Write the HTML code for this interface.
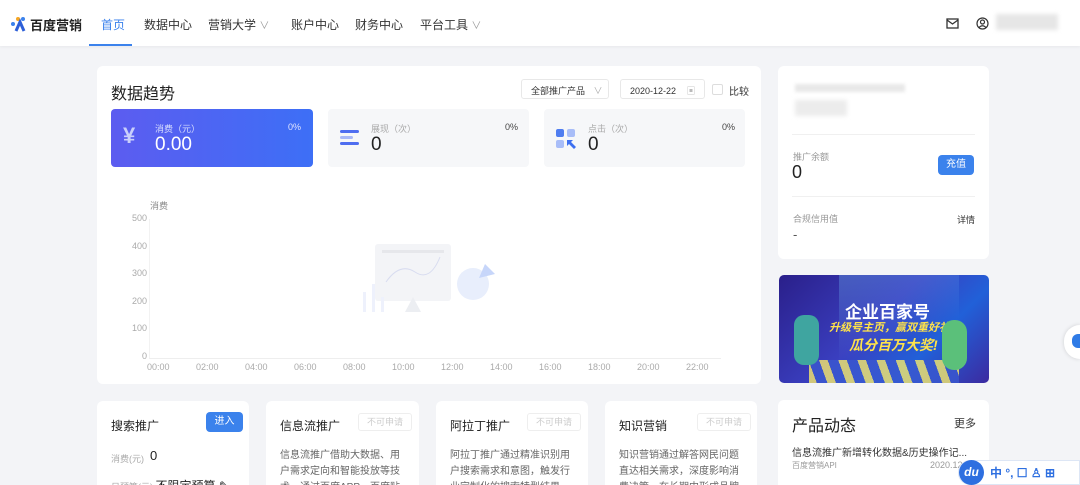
<!DOCTYPE html>
<html><head><meta charset="utf-8">
<style>
*{margin:0;padding:0;box-sizing:border-box}
html,body{width:1080px;height:485px;overflow:hidden}
body{background:#f3f4f7;font-family:"Liberation Sans","Noto Sans CJK SC",sans-serif;color:#222}
#root{position:relative;width:1080px;height:485px;overflow:hidden}
.abs{position:absolute}
.hdr{left:0;top:0;width:1080px;height:46px;background:#fff;box-shadow:0 1px 3px rgba(0,0,0,.05)}
.nav{top:16px;font-size:12px;color:#333}
.card{background:#fff;border-radius:6px 6px 0 0}
.t{white-space:nowrap}
.ylab{font-size:9px;color:#aaa;width:30px;text-align:right;left:117px}
.xlab{font-size:9px;color:#aaa;top:362px}
.btn{background:#3b82ec;color:#fff;border-radius:4px;font-size:10px;text-align:center}
.dis{border:1px solid #eee;color:#ccc;font-size:9px;text-align:center;border-radius:3px;width:54px;height:18px;line-height:16px}
.desc{font-size:10px;color:#666;line-height:16px;height:37px;overflow:hidden}
</style></head><body><div id="root">
<div class="abs hdr"></div>
<svg class="abs" style="left:10px;top:16px" width="20" height="16" viewBox="0 0 20 16">
<circle cx="3" cy="8" r="2" fill="#3b82ec"/><circle cx="8" cy="3" r="2" fill="#f5a623"/><circle cx="13" cy="3" r="2" fill="#3b82ec"/>
<path d="M6 15 L10 6 L14 15" stroke="#2d5fd8" stroke-width="3" fill="none"/></svg>
<div class="abs t" style="left:30px;top:15px;font-size:13px;font-weight:bold;color:#222">百度营销</div>
<div class="abs nav t" style="left:101px;color:#3b82ec">首页</div>
<div class="abs" style="left:89px;top:44px;width:43px;height:2px;background:#3b82ec"></div>
<div class="abs nav t" style="left:144px">数据中心</div>
<div class="abs nav t" style="left:208px">营销大学 <span style="color:#999;font-size:10px">∨</span></div>
<div class="abs nav t" style="left:291px">账户中心</div>
<div class="abs nav t" style="left:355px">财务中心</div>
<div class="abs nav t" style="left:420px">平台工具 <span style="color:#999;font-size:10px">∨</span></div>
<svg class="abs" style="left:946px;top:18px" width="13" height="11"><rect x="1" y="1" width="11" height="9" fill="none" stroke="#333" stroke-width="1.3"/><path d="M1 2 L6.5 6 L12 2" fill="none" stroke="#333" stroke-width="1.3"/></svg>
<svg class="abs" style="left:976px;top:17px" width="13" height="13"><circle cx="6.5" cy="6.5" r="5.5" fill="none" stroke="#333" stroke-width="1.2"/><circle cx="6.5" cy="5" r="2" fill="none" stroke="#333" stroke-width="1.2"/><path d="M3 10.5 Q6.5 7 10 10.5" fill="none" stroke="#333" stroke-width="1.2"/></svg>
<div class="abs" style="left:996px;top:14px;width:62px;height:16px;background:#e6e6e6;filter:blur(2px)"></div>

<div class="abs card" style="left:97px;top:66px;width:664px;height:318px;border-radius:6px"></div>
<div class="abs t" style="left:111px;top:80px;font-size:16px;color:#222">数据趋势</div>
<div class="abs t" style="left:521px;top:79px;width:88px;height:20px;border:1px solid #e8e8e8;border-radius:3px;font-size:9px;color:#333;padding:4px 0 0 9px">全部推广产品 <span style="color:#aaa;margin-left:6px">∨</span></div>
<div class="abs t" style="left:620px;top:79px;width:85px;height:20px;border:1px solid #e8e8e8;border-radius:3px;font-size:9px;color:#333;padding:4px 0 0 9px">2020-12-22 <span style="color:#bbb;margin-left:8px">▣</span></div>
<div class="abs" style="left:712px;top:84px;width:11px;height:11px;border:1px solid #ddd;border-radius:2px"></div>
<div class="abs t" style="left:729px;top:83px;font-size:10px;color:#333">比较</div>

<div class="abs" style="left:111px;top:109px;width:202px;height:58px;border-radius:4px;background:linear-gradient(90deg,#5c5cf0,#3d6ff6)"></div>
<div class="abs t" style="left:123px;top:123px;font-size:22px;color:#c9cffb;font-weight:bold">¥</div>
<div class="abs t" style="left:155px;top:122px;font-size:9px;color:#d8defd">消费（元）</div>
<div class="abs t" style="left:155px;top:134px;font-size:19px;color:#fff">0.00</div>
<div class="abs t" style="left:288px;top:122px;font-size:9px;color:#e0e5ff">0%</div>

<div class="abs" style="left:328px;top:109px;width:201px;height:58px;border-radius:4px;background:#f6f7f9"></div>
<div class="abs" style="left:340px;top:130px;width:19px;height:3px;background:#4f6ef0;border-radius:2px"></div>
<div class="abs" style="left:340px;top:136px;width:13px;height:3px;background:#a9b9f8;border-radius:2px"></div>
<div class="abs" style="left:340px;top:142px;width:19px;height:3px;background:#4f6ef0;border-radius:2px"></div>
<div class="abs t" style="left:371px;top:122px;font-size:9px;color:#aaa">展现（次）</div>
<div class="abs t" style="left:371px;top:134px;font-size:19px">0</div>
<div class="abs t" style="left:505px;top:122px;font-size:9px;color:#444">0%</div>

<div class="abs" style="left:544px;top:109px;width:201px;height:58px;border-radius:4px;background:#f6f7f9"></div>
<div class="abs" style="left:556px;top:129px;width:8px;height:8px;background:#4f7df0;border-radius:2px"></div>
<div class="abs" style="left:567px;top:129px;width:8px;height:8px;background:#a8bdf8;border-radius:2px"></div>
<div class="abs" style="left:556px;top:140px;width:8px;height:8px;background:#a8bdf8;border-radius:2px"></div>
<svg class="abs" style="left:567px;top:140px" width="9" height="9"><path d="M0 0 H6 L4 2 L9 7 L7 9 L2 4 L0 6Z" fill="#3d6ff0"/></svg>
<div class="abs t" style="left:588px;top:122px;font-size:9px;color:#aaa">点击（次）</div>
<div class="abs t" style="left:588px;top:134px;font-size:19px">0</div>
<div class="abs t" style="left:722px;top:122px;font-size:9px;color:#444">0%</div>

<div class="abs t" style="left:150px;top:199px;font-size:9px;color:#888">消费</div>
<div class="abs ylab" style="top:213px">500</div>
<div class="abs ylab" style="top:241px">400</div>
<div class="abs ylab" style="top:268px">300</div>
<div class="abs ylab" style="top:296px">200</div>
<div class="abs ylab" style="top:323px">100</div>
<div class="abs ylab" style="top:351px">0</div>
<div class="abs" style="left:149px;top:219px;width:1px;height:140px;background:#f2f2f2"></div>
<div class="abs" style="left:149px;top:358px;width:572px;height:1px;background:#eee"></div>
<div class="abs xlab" style="left:147px">00:00</div>
<div class="abs xlab" style="left:196px">02:00</div>
<div class="abs xlab" style="left:245px">04:00</div>
<div class="abs xlab" style="left:294px">06:00</div>
<div class="abs xlab" style="left:343px">08:00</div>
<div class="abs xlab" style="left:392px">10:00</div>
<div class="abs xlab" style="left:441px">12:00</div>
<div class="abs xlab" style="left:490px">14:00</div>
<div class="abs xlab" style="left:539px">16:00</div>
<div class="abs xlab" style="left:588px">18:00</div>
<div class="abs xlab" style="left:637px">20:00</div>
<div class="abs xlab" style="left:686px">22:00</div>
<svg class="abs" style="left:360px;top:242px" width="140" height="72">
<rect x="15" y="2" width="76" height="57" rx="3" fill="#f3f4f7"/>
<rect x="22" y="8" width="62" height="3" fill="#e6e7eb"/>
<path d="M26 40 Q40 20 55 30 T80 15" fill="none" stroke="#d8dcf0" stroke-width="1"/>
<path d="M45 70 L53 55 L61 70Z" fill="#eceef2"/>
<rect x="3" y="50" width="3" height="20" fill="#eef1fc"/><rect x="12" y="42" width="3" height="28" fill="#eef1fc"/><rect x="21" y="55" width="3" height="15" fill="#eef1fc"/>
<circle cx="113" cy="42" r="16" fill="#e8eefc"/><path d="M119 36 L125 22 L135 32Z" fill="#c7d6fa"/>
</svg>

<div class="abs card" style="left:778px;top:66px;width:211px;height:193px;border-radius:6px"></div>
<div class="abs" style="left:795px;top:84px;width:110px;height:8px;background:#e8e8e8;filter:blur(1.5px)"></div>
<div class="abs" style="left:795px;top:100px;width:52px;height:16px;background:#ececec;filter:blur(2px)"></div>
<div class="abs" style="left:792px;top:134px;width:183px;height:1px;background:#f0f0f0"></div>
<div class="abs t" style="left:793px;top:150px;font-size:9px;color:#999">推广余额</div>
<div class="abs t" style="left:792px;top:162px;font-size:18px">0</div>
<div class="abs btn" style="left:938px;top:155px;width:36px;height:20px;line-height:20px">充值</div>
<div class="abs" style="left:792px;top:196px;width:183px;height:1px;background:#f0f0f0"></div>
<div class="abs t" style="left:793px;top:212px;font-size:9px;color:#999">合规信用值</div>
<div class="abs t" style="left:957px;top:213px;font-size:9px;color:#333">详情</div>
<div class="abs t" style="left:793px;top:227px;font-size:13px;color:#555">-</div>

<div class="abs" style="left:779px;top:275px;width:210px;height:108px;border-radius:5px;overflow:hidden;background:linear-gradient(135deg,#2a1f8a,#3a3fc0 45%,#2160d8 70%,#3c2aa0)">
<div class="abs" style="left:60px;top:-10px;width:120px;height:120px;background:linear-gradient(160deg,rgba(120,200,255,.35),transparent 60%)"></div>
<div class="abs" style="left:30px;top:85px;width:150px;height:25px;background:repeating-linear-gradient(70deg,#f7e96a 0 8px,#3a58d0 8px 18px);opacity:.8"></div>
<div class="abs t" style="left:66px;top:23px;font-size:17px;font-weight:bold;color:#fff">企业百家号</div>
<div class="abs t" style="left:50px;top:44px;font-size:11px;font-weight:bold;color:#ffe34a;font-style:italic">升级号主页，赢双重好礼</div>
<div class="abs t" style="left:70px;top:60px;font-size:14px;font-weight:bold;color:#ffe34a;font-style:italic">瓜分百万大奖!</div>
<div class="abs" style="left:15px;top:40px;width:25px;height:50px;background:#3fa5a0;border-radius:10px"></div>
<div class="abs" style="left:163px;top:45px;width:25px;height:50px;background:#5bc07a;border-radius:12px"></div>
</div>

<div class="abs card" style="left:97px;top:401px;width:152px;height:84px"></div>
<div class="abs t" style="left:111px;top:417px;font-size:12px">搜索推广</div>
<div class="abs btn" style="left:206px;top:412px;width:37px;height:20px;line-height:20px">进入</div>
<div class="abs t" style="left:111px;top:452px;font-size:9px;color:#aaa">消费(元)</div>
<div class="abs t" style="left:150px;top:448px;font-size:13px">0</div>
<div class="abs t" style="left:111px;top:477px;height:8px;overflow:hidden;font-size:9px;color:#aaa">日预算(元) <span style="font-size:12px;color:#222">不限定预算 ✎</span></div>

<div class="abs card" style="left:266px;top:401px;width:153px;height:84px"></div>
<div class="abs t" style="left:280px;top:417px;font-size:12px">信息流推广</div>
<div class="abs dis" style="left:358px;top:413px">不可申请</div>
<div class="abs desc" style="left:280px;top:448px;width:128px">信息流推广借助大数据、用户需求定向和智能投放等技术，通过百度APP、百度贴吧、好看视频</div>

<div class="abs card" style="left:436px;top:401px;width:152px;height:84px"></div>
<div class="abs t" style="left:450px;top:417px;font-size:12px">阿拉丁推广</div>
<div class="abs dis" style="left:527px;top:413px">不可申请</div>
<div class="abs desc" style="left:450px;top:448px;width:128px">阿拉丁推广通过精准识别用户搜索需求和意图，触发行业定制化的搜索特型结果</div>

<div class="abs card" style="left:605px;top:401px;width:152px;height:84px"></div>
<div class="abs t" style="left:619px;top:417px;font-size:12px">知识营销</div>
<div class="abs dis" style="left:697px;top:413px">不可申请</div>
<div class="abs desc" style="left:619px;top:448px;width:128px">知识营销通过解答网民问题直达相关需求，深度影响消费决策，在长期中形成品牌与商家营销的</div>

<div class="abs card" style="left:778px;top:400px;width:211px;height:85px"></div>
<div class="abs t" style="left:792px;top:412px;font-size:16px">产品动态</div>
<div class="abs t" style="left:954px;top:415px;font-size:11px;color:#333">更多</div>
<div class="abs t" style="left:792px;top:444px;font-size:10px;color:#333">信息流推广新增转化数据&amp;历史操作记...</div>
<div class="abs t" style="left:792px;top:460px;font-size:8px;color:#999">百度营销API</div>
<div class="abs t" style="left:930px;top:460px;font-size:9px;color:#999">2020.12</div>

<div class="abs" style="left:1064px;top:325px;width:16px;height:34px;border-radius:16px 0 0 16px;background:#fff;box-shadow:0 0 4px rgba(0,0,0,.15)"></div>
<div class="abs" style="left:1072px;top:334px;width:8px;height:14px;border-radius:6px 0 0 6px;background:#2f7be6"></div>
<div class="abs" style="left:958px;top:460px;width:122px;height:25px;background:#fff;border:1px solid #dde6f5;border-radius:12px 0 0 12px"></div>
<div class="abs t" style="left:959px;top:460px;width:25px;height:25px;border-radius:50%;background:#2e6fe0;color:#fff;font-size:12px;font-weight:bold;text-align:center;line-height:24px;font-style:italic">du</div>
<div class="abs t" style="left:990px;top:464px;font-size:12px;color:#2e6fe0;font-weight:bold">中 °, ☐ ♙ ⊞</div>
</div></body></html>
